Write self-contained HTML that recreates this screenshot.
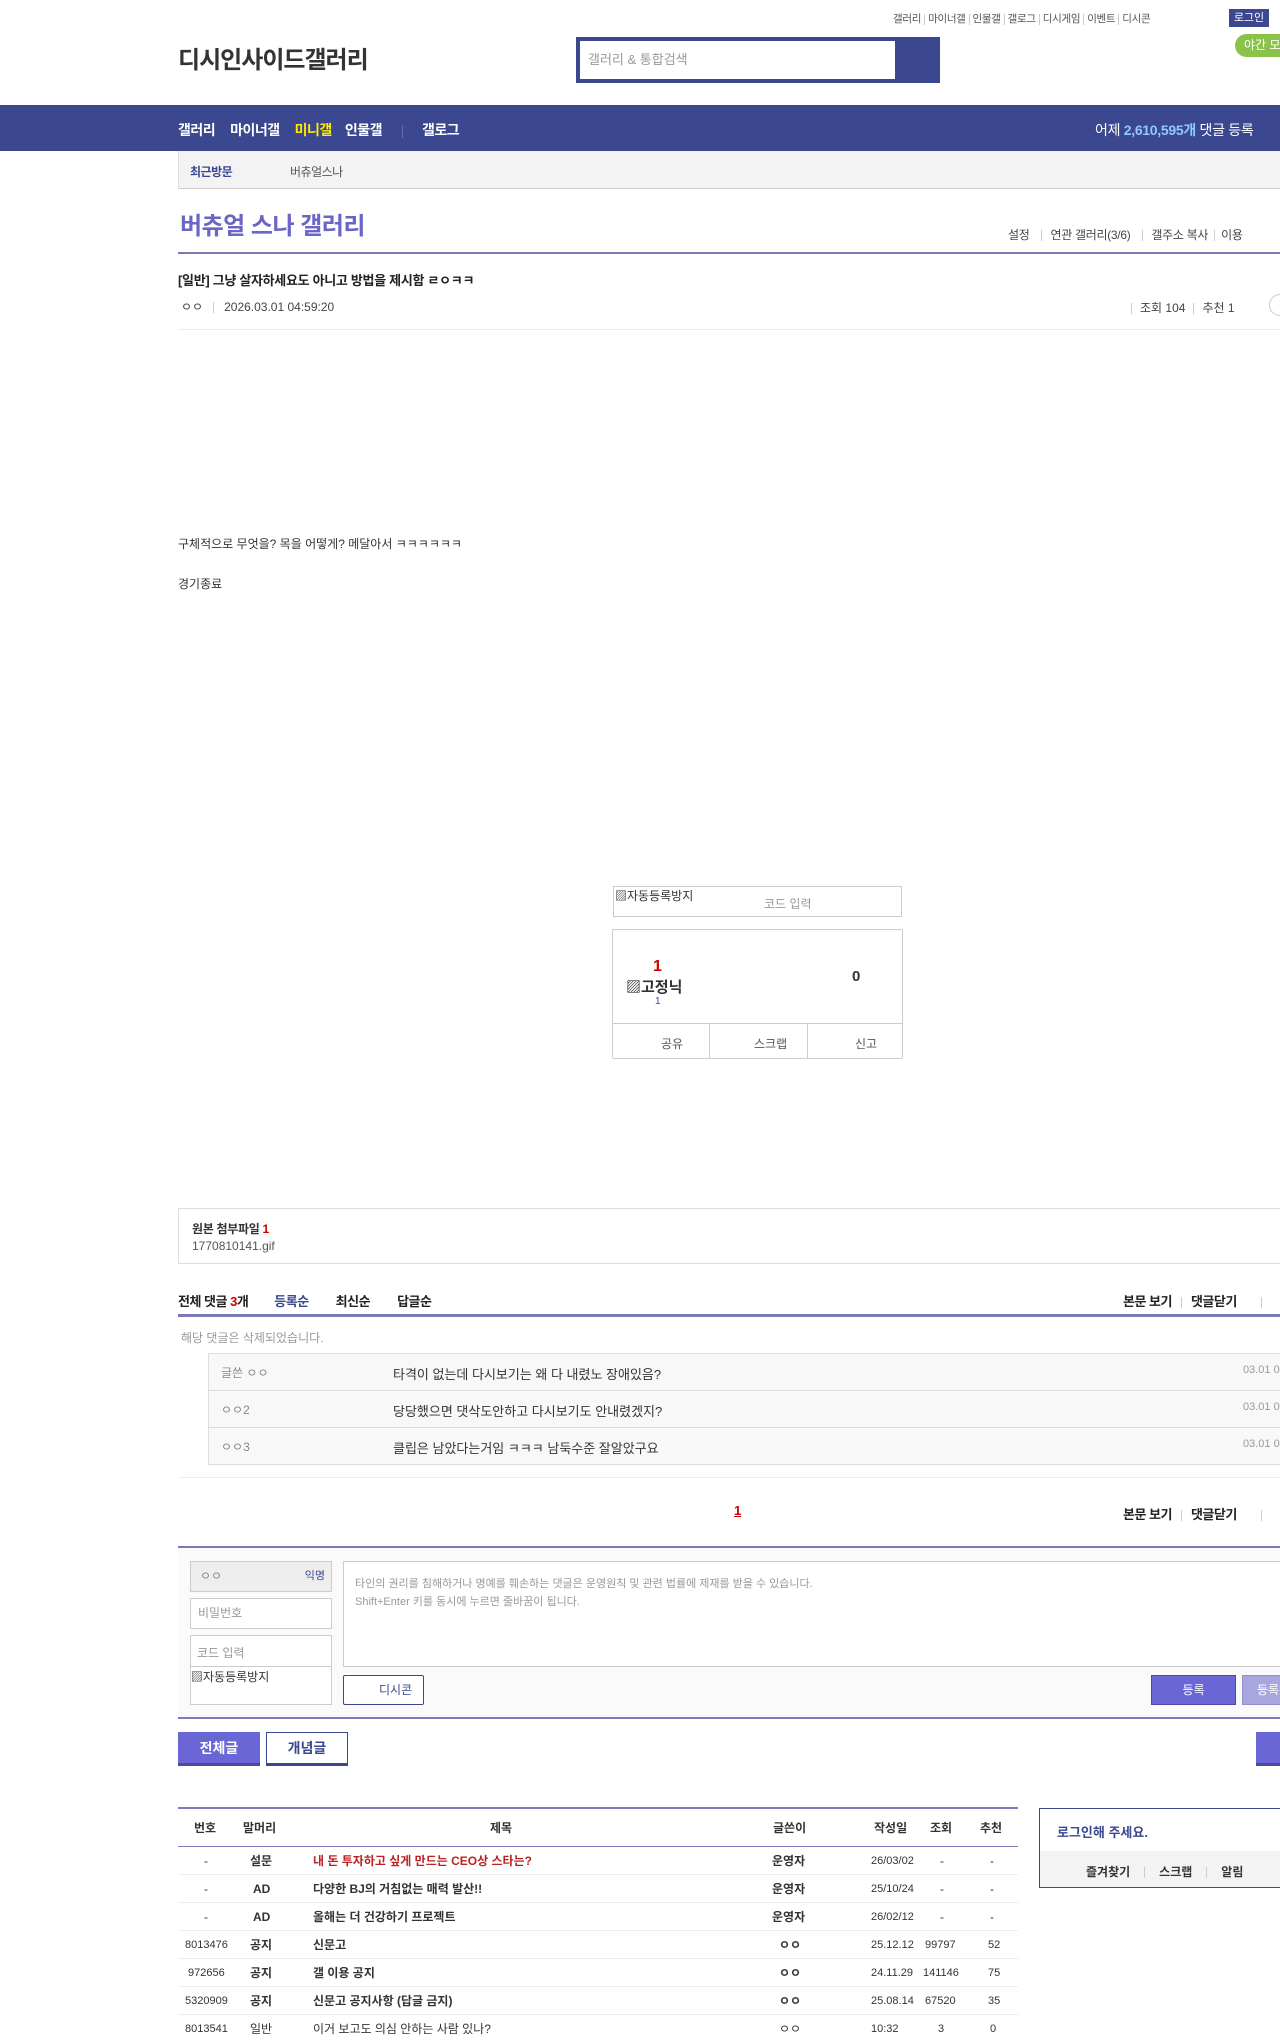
<!DOCTYPE html>
<html><head><meta charset="utf-8"><style>
*{margin:0;padding:0;box-sizing:border-box}
body{width:1280px;height:2026px;overflow:hidden;position:relative;background:#fff;font-family:"Liberation Sans","Noto Sans CJK KR",sans-serif;color:#333;font-size:12px}
.a{position:absolute;white-space:nowrap}
.sep{display:inline-block;width:1px;height:11px;background:#ccc;margin:0 6px;vertical-align:middle}
.row{position:absolute;left:0;width:1280px}
</style></head><body>
<div class="a" style="top:11px;left:893px;font-size:10.5px;color:#555;letter-spacing:-0.3px">갤러리<span class="sep" style="margin:0 3px"></span>마이너갤<span class="sep" style="margin:0 3px"></span>인물갤<span class="sep" style="margin:0 3px"></span>갤로그<span class="sep" style="margin:0 3px"></span>디시게임<span class="sep" style="margin:0 3px"></span>이벤트<span class="sep" style="margin:0 3px"></span>디시콘</div>
<div class="a" style="top:9px;left:1229px;width:40px;height:18px;background:#3b4890;color:#fff;font-size:11px;text-align:center;line-height:18px">로그인</div>
<div class="a" style="top:34px;left:1235px;width:60px;height:23px;background:#8bc34a;border-radius:12px;color:#fff;font-size:12px;line-height:23px;padding-left:9px">야간 모드</div>
<div class="a" style="top:40px;left:178px;font-size:24px;color:#333;font-weight:bold;letter-spacing:-1px">디시인사이드갤러리</div>
<div class="a" style="top:37px;left:576px;width:364px;height:46px;background:#3b4890"></div>
<div class="a" style="top:41px;left:580px;width:315px;height:38px;background:#fff;color:#999;font-size:13px;line-height:38px;padding-left:8px">갤러리 &amp; 통합검색</div>
<div class="row" style="top:105px;height:46px;background:#3b4890"></div>
<div class="a" style="top:120px;left:178px;color:#fff;font-size:14px;font-weight:bold;letter-spacing:-0.5px">갤러리<span style="margin-left:15px">마이너갤</span><span style="margin-left:15px;color:#ffea00">미니갤</span><span style="margin-left:13px">인물갤</span><span style="display:inline-block;width:1px;height:13px;background:#6470aa;margin:0 19px 0 20px;vertical-align:middle"></span>갤로그</div>
<div class="a" style="top:120px;left:1095px;color:#fff;font-size:14px;letter-spacing:-0.3px">어제 <b style="color:#8ec9ff">2,610,595개</b> 댓글 등록</div>
<div class="a" style="top:151px;left:178px;width:1102px;height:38px;background:#f3f3f3;border-left:1px solid #ddd;border-bottom:1px solid #ccc"></div>
<div class="a" style="top:163px;left:190px;font-size:12px;color:#3b4890;font-weight:bold;letter-spacing:-0.5px">최근방문</div>
<div class="a" style="top:163px;left:290px;font-size:12px;color:#555;letter-spacing:-0.5px">버츄얼스나</div>
<div class="a" style="top:206px;left:180px;font-size:24px;color:#6b66c6;font-weight:bold;letter-spacing:-0.5px">버츄얼 스나 갤러리</div>
<div class="a" style="top:226px;left:1008px;font-size:12px;color:#444;letter-spacing:-0.3px">설정<span class="sep" style="margin:0 8px 0 12px"></span>연관 갤러리(3/6)<span class="sep" style="margin:0 8px 0 12px"></span>갤주소 복사<span class="sep"></span>이용</div>
<div class="a" style="top:252px;left:178px;width:1102px;height:2px;background:#7b79b8"></div>
<div class="a" style="top:270px;left:178px;font-size:13px;font-weight:bold;color:#222;letter-spacing:-0.3px">[일반] 그냥 살자하세요도 아니고 방법을 제시함 ㄹㅇㅋㅋ</div>
<div class="a" style="top:298px;left:181px;font-size:12px;color:#444">ㅇㅇ<span class="sep" style="margin:0 10px"></span>2026.03.01 04:59:20</div>
<div class="a" style="top:299px;left:1131px;font-size:12px;color:#444"><span class="sep" style="margin:0 8px 0 0"></span>조회 104<span class="sep" style="margin:0 8px"></span>추천 1</div>
<div class="a" style="top:294px;left:1269px;width:22px;height:22px;border:1px solid #ccc;border-radius:50%"></div>
<div class="a" style="top:329px;left:178px;width:1102px;height:1px;background:#eee"></div>
<div class="a" style="top:535px;left:178px;font-size:12px;color:#333">구체적으로 무엇을? 목을 어떻게? 메달아서 ㅋㅋㅋㅋㅋㅋ</div>
<div class="a" style="top:575px;left:178px;font-size:12px;color:#333">경기종료</div>
<div class="a" style="top:886px;left:613px;width:289px;height:31px;border:1px solid #ccc"></div>
<div class="a" style="top:887px;left:615px;font-size:12px;color:#333">▨자동등록방지</div>
<div class="a" style="top:895px;left:764px;font-size:12px;color:#999">코드 입력</div>
<div class="a" style="top:929px;left:612px;width:291px;height:130px;border:1px solid #ccc;border-radius:2px"></div>
<div class="a" style="top:1023px;left:612px;width:291px;height:1px;background:#ccc"></div>
<div class="a" style="top:1023px;left:709px;width:1px;height:36px;background:#ccc"></div>
<div class="a" style="top:1023px;left:807px;width:1px;height:36px;background:#ccc"></div>
<div class="a" style="top:1035px;left:661px;font-size:12px;color:#555">공유</div>
<div class="a" style="top:1035px;left:754px;font-size:12px;color:#555">스크랩</div>
<div class="a" style="top:1035px;left:855px;font-size:12px;color:#555">신고</div>
<div class="a" style="top:958px;left:653px;font-size:16px;color:#c00;font-weight:bold">1</div>
<div class="a" style="top:976px;left:626px;font-size:15px;color:#333;font-weight:bold">▨고정닉</div>
<div class="a" style="top:996px;left:655px;font-size:10px;color:#3b4890">1</div>
<div class="a" style="top:968px;left:852px;font-size:15px;color:#333;font-weight:bold">0</div>
<div class="a" style="top:1208px;left:178px;width:1110px;height:56px;border:1px solid #ddd"></div>
<div class="a" style="top:1220px;left:192px;font-size:12px;font-weight:bold;color:#333;letter-spacing:-0.3px">원본 첨부파일 <span style="color:#c00">1</span></div>
<div class="a" style="top:1239px;left:192px;font-size:12px;color:#555">1770810141.gif</div>
<div class="a" style="top:1291px;left:178px;font-size:13px;font-weight:bold;color:#222;letter-spacing:-0.5px">전체 댓글 <span style="color:#c00">3</span>개<span style="color:#3b4890;margin-left:26px">등록순</span><span style="margin-left:27px">최신순</span><span style="margin-left:27px">답글순</span></div>
<div class="a" style="top:1291px;left:1123px;font-size:13px;font-weight:bold;color:#222;letter-spacing:-0.5px">본문 보기<span class="sep" style="margin:0 9px"></span>댓글닫기<span class="sep" style="margin:0 0 0 24px"></span></div>
<div class="a" style="top:1314px;left:178px;width:1102px;height:3px;background:#7b79b8"></div>
<div class="a" style="top:1329px;left:181px;font-size:12px;color:#999">해당 댓글은 삭제되었습니다.</div>
<div class="a" style="top:1353px;left:208px;width:1080px;height:112px;background:#f8f8f8;border:1px solid #ddd"></div>
<div class="a" style="top:1390px;left:208px;width:1080px;height:1px;background:#ddd"></div>
<div class="a" style="top:1427px;left:208px;width:1080px;height:1px;background:#ddd"></div>
<div class="a" style="top:1364px;left:221px;font-size:12px;color:#888">글쓴 ㅇㅇ</div>
<div class="a" style="top:1401px;left:221px;font-size:12px;color:#888">ㅇㅇ2</div>
<div class="a" style="top:1438px;left:221px;font-size:12px;color:#888">ㅇㅇ3</div>
<div class="a" style="top:1364px;left:393px;font-size:13px;color:#333">타격이 없는데 다시보기는 왜 다 내렸노 장애있음?</div>
<div class="a" style="top:1401px;left:393px;font-size:13px;color:#333">당당했으면 댓삭도안하고 다시보기도 안내렸겠지?</div>
<div class="a" style="top:1438px;left:393px;font-size:13px;color:#333">클립은 남았다는거임 ㅋㅋㅋ 남둑수준 잘알았구요</div>
<div class="a" style="top:1364px;left:1243px;font-size:11px;color:#999">03.01 05:00</div>
<div class="a" style="top:1401px;left:1243px;font-size:11px;color:#999">03.01 05:01</div>
<div class="a" style="top:1438px;left:1243px;font-size:11px;color:#999">03.01 05:02</div>
<div class="a" style="top:1477px;left:178px;width:1102px;height:1px;background:#eee"></div>
<div class="a" style="top:1503px;left:734px;font-size:13px;font-weight:bold;color:#c00;text-decoration:underline">1</div>
<div class="a" style="top:1504px;left:1123px;font-size:13px;font-weight:bold;color:#222;letter-spacing:-0.5px">본문 보기<span class="sep" style="margin:0 9px"></span>댓글닫기<span class="sep" style="margin:0 0 0 24px"></span></div>
<div class="a" style="top:1546px;left:178px;width:1102px;height:2px;background:#7b79b8"></div>
<div class="a" style="top:1548px;left:178px;width:1102px;height:170px;background:#fafafa"></div>
<div class="a" style="top:1561px;left:190px;width:142px;height:31px;background:#eee;border:1px solid #ccc;font-size:12px;color:#888;line-height:29px;padding-left:9px">ㅇㅇ<span style="position:absolute;right:6px;color:#3b4890;font-size:11px">익명</span></div>
<div class="a" style="top:1598px;left:190px;width:142px;height:31px;background:#fff;border:1px solid #ccc;font-size:12px;color:#999;line-height:29px;padding-left:7px">비밀번호</div>
<div class="a" style="top:1635px;left:190px;width:142px;height:70px;background:#fff;border:1px solid #ccc"></div>
<div class="a" style="top:1666px;left:190px;width:142px;height:1px;background:#ccc"></div>
<div class="a" style="top:1644px;left:197px;font-size:12px;color:#999">코드 입력</div>
<div class="a" style="top:1668px;left:191px;font-size:12px;color:#333">▨자동등록방지</div>
<div class="a" style="top:1561px;left:343px;width:950px;height:106px;background:#fff;border:1px solid #ccc"></div>
<div class="a" style="top:1575px;left:355px;font-size:11px;color:#999;line-height:18px">타인의 권리를 침해하거나 명예를 훼손하는 댓글은 운영원칙 및 관련 법률에 제재를 받을 수 있습니다.<br>Shift+Enter 키를 동시에 누르면 줄바꿈이 됩니다.</div>
<div class="a" style="top:1675px;left:343px;width:81px;height:30px;background:#fff;border:1px solid #3b4890;border-radius:2px;font-size:12px;color:#3b4890;line-height:28px;padding-left:35px">디시콘</div>
<div class="a" style="top:1675px;left:1151px;width:85px;height:30px;background:#6b66d6;border:1px solid #4d48a8;color:#fff;font-size:12px;text-align:center;line-height:28px">등록</div>
<div class="a" style="top:1675px;left:1242px;width:85px;height:30px;background:#a9a6de;border:1px solid #9390c8;color:#fff;font-size:12px;line-height:28px;padding-left:14px">등록+추천</div>
<div class="a" style="top:1717px;left:178px;width:1102px;height:2px;background:#7b79b8"></div>
<div class="a" style="top:1732px;left:178px;width:82px;height:34px;background:#6b66d6;border-bottom:3px solid #4d48a8;color:#fff;font-size:14px;font-weight:bold;text-align:center;line-height:32px">전체글</div>
<div class="a" style="top:1732px;left:266px;width:82px;height:34px;background:#fff;border:1px solid #3b4890;border-bottom:3px solid #3b4890;color:#3b4890;font-size:14px;font-weight:bold;text-align:center;line-height:30px">개념글</div>
<div class="a" style="top:1732px;left:1256px;width:60px;height:34px;background:#6b66d6;border-bottom:3px solid #4d48a8"></div>
<div class="a" style="top:1807px;left:178px;width:840px;height:2px;background:#7b79b8"></div>
<div class="a" style="top:1846px;left:178px;width:840px;height:1px;background:#7b79b8"></div>
<div class="a" style="top:1819px;left:178px;width:840px;font-size:12px;font-weight:bold;color:#333">
<span class="a" style="left:16px">번호</span><span class="a" style="left:65px">말머리</span><span class="a" style="left:312px">제목</span><span class="a" style="left:595px">글쓴이</span><span class="a" style="left:696px">작성일</span><span class="a" style="left:752px">조회</span><span class="a" style="left:802px">추천</span></div>
<div class="a" style="top:1808px;left:1039px;width:260px;height:80px;border:1px solid #3b4890"></div>
<div class="a" style="top:1851px;left:1040px;width:250px;height:36px;background:#f3f3f3"></div>
<div class="a" style="top:1822px;left:1057px;font-size:13px;font-weight:bold;color:#3b4890">로그인해 주세요.</div>
<div class="a" style="top:1863px;left:1086px;font-size:12px;color:#333;font-weight:bold">즐겨찾기<span class="sep" style="margin:0 14px"></span>스크랩<span class="sep" style="margin:0 14px"></span>알림</div>
<div style="position:absolute;top:1847px;left:178px;width:840px;font-size:12px">
<div style="height:28px;border-bottom:1px solid #eee;position:relative;line-height:28px"><span class="a" style="left:26px">-</span><span class="a" style="left:72px;font-weight:bold">설문</span><span class="a" style="left:135px;font-weight:bold;color:#b22">내 돈 투자하고 싶게 만드는 CEO상 스타는?</span><span class="a" style="left:594px;font-weight:bold">운영자</span><span class="a" style="left:693px;font-size:11px">26/03/02</span><span class="a" style="left:762px">-</span><span class="a" style="left:812px">-</span></div>
<div style="height:28px;border-bottom:1px solid #eee;position:relative;line-height:28px"><span class="a" style="left:26px">-</span><span class="a" style="left:75px;font-weight:bold">AD</span><span class="a" style="left:135px;font-weight:bold">다양한 BJ의 거침없는 매력 발산!!</span><span class="a" style="left:594px;font-weight:bold">운영자</span><span class="a" style="left:693px;font-size:11px">25/10/24</span><span class="a" style="left:762px">-</span><span class="a" style="left:812px">-</span></div>
<div style="height:28px;border-bottom:1px solid #eee;position:relative;line-height:28px"><span class="a" style="left:26px">-</span><span class="a" style="left:75px;font-weight:bold">AD</span><span class="a" style="left:135px;font-weight:bold">올해는 더 건강하기 프로젝트</span><span class="a" style="left:594px;font-weight:bold">운영자</span><span class="a" style="left:693px;font-size:11px">26/02/12</span><span class="a" style="left:762px">-</span><span class="a" style="left:812px">-</span></div>
<div style="height:28px;border-bottom:1px solid #eee;position:relative;line-height:28px"><span class="a" style="left:7px;font-size:11px">8013476</span><span class="a" style="left:72px;font-weight:bold">공지</span><span class="a" style="left:135px;font-weight:bold">신문고</span><span class="a" style="left:601px;font-weight:bold">ㅇㅇ</span><span class="a" style="left:693px;font-size:11px">25.12.12</span><span class="a" style="left:747px;font-size:11px">99797</span><span class="a" style="left:810px;font-size:11px">52</span></div>
<div style="height:28px;border-bottom:1px solid #eee;position:relative;line-height:28px"><span class="a" style="left:10px;font-size:11px">972656</span><span class="a" style="left:72px;font-weight:bold">공지</span><span class="a" style="left:135px;font-weight:bold">갤 이용 공지</span><span class="a" style="left:601px;font-weight:bold">ㅇㅇ</span><span class="a" style="left:693px;font-size:11px">24.11.29</span><span class="a" style="left:745px;font-size:11px">141146</span><span class="a" style="left:810px;font-size:11px">75</span></div>
<div style="height:28px;border-bottom:1px solid #eee;position:relative;line-height:28px"><span class="a" style="left:7px;font-size:11px">5320909</span><span class="a" style="left:72px;font-weight:bold">공지</span><span class="a" style="left:135px;font-weight:bold">신문고 공지사항 (답글 금지)</span><span class="a" style="left:601px;font-weight:bold">ㅇㅇ</span><span class="a" style="left:693px;font-size:11px">25.08.14</span><span class="a" style="left:747px;font-size:11px">67520</span><span class="a" style="left:810px;font-size:11px">35</span></div>
<div style="height:28px;position:relative;line-height:28px"><span class="a" style="left:7px;font-size:11px">8013541</span><span class="a" style="left:72px">일반</span><span class="a" style="left:135px">이거 보고도 의심 안하는 사람 있나?</span><span class="a" style="left:601px">ㅇㅇ</span><span class="a" style="left:693px;font-size:11px">10:32</span><span class="a" style="left:760px;font-size:11px">3</span><span class="a" style="left:812px;font-size:11px">0</span></div>
</div>
</body></html>
